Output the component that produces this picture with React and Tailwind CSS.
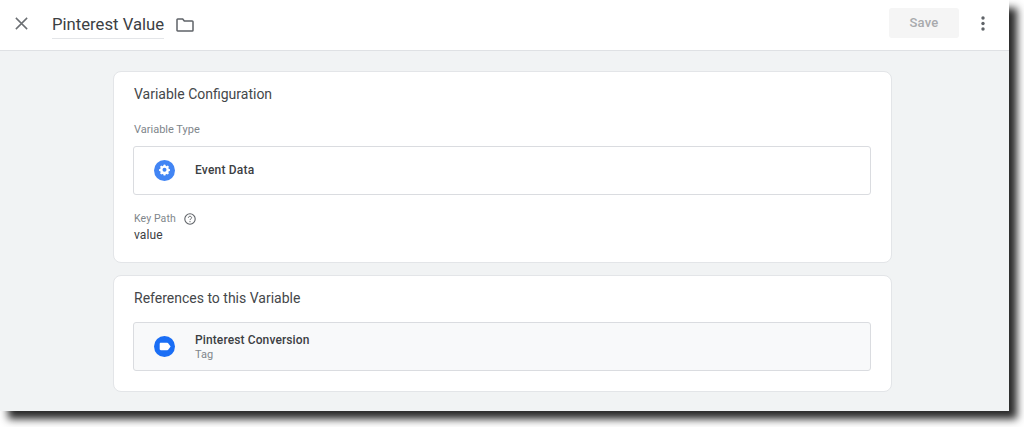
export default function App() {
  const font = { fontFamily: 'Roboto, sans-serif' };
  return (
    <div className="w-[1024px] h-[427px] bg-white overflow-hidden font-['Roboto',sans-serif]" style={font}>
      <div className="w-[1009px] h-[411px] bg-[#f1f3f4] shadow-[8px_8px_8px_#2a2a2a] flex flex-col">
        <header className="h-[51px] shrink-0 bg-white border-b border-[#dfe1e4] flex items-center pl-[15px] pr-[16px] pb-[4px]">
          <svg width="13" height="13" viewBox="0 0 15 15" className="shrink-0">
            <path d="M1 1 L14 14 M14 1 L1 14" stroke="#6b6f73" strokeWidth="1.7" fill="none" />
          </svg>
          <div className="ml-[24px] h-[33px] mt-[-1px] pt-[5px] border-b border-[#e3e5e8] flex items-center">
            <span className="text-[16.7px] leading-[24px] text-[#3c4043]">Pinterest Value</span>
          </div>
          <svg width="18" height="14" viewBox="0 0 18 14" className="ml-[12px] mt-[3px] shrink-0">
            <path d="M1.7 1h5l1.6 2h7.9c.5 0 .8.3.8.8v8.4c0 .5-.3.8-.8.8H1.7c-.4 0-.7-.3-.7-.8V1.8c0-.5.3-.8.7-.8z" stroke="#5f6368" strokeWidth="1.5" fill="none" />
          </svg>
          <div className="ml-auto w-[70px] h-[30px] rounded-[3px] bg-[#f5f5f5] flex items-center justify-center text-[13px] font-medium text-[#a8aaad] tracking-[0.2px]">Save</div>
          <svg width="4" height="15" viewBox="0 0 4 15" className="ml-[22px] mr-[8px] shrink-0">
            <circle cx="2" cy="2" r="1.7" fill="#5f6368" />
            <circle cx="2" cy="7.5" r="1.7" fill="#5f6368" />
            <circle cx="2" cy="13" r="1.7" fill="#5f6368" />
          </svg>
        </header>
        <main className="flex flex-col pl-[113px] pt-[20px] gap-[12px]">
          <section className="w-[779px] h-[192px] bg-white border border-[#e3e5e8] rounded-[8px] pl-[19px] pr-[20px] pt-[13px]">
            <h2 className="pl-[1px] text-[14px] leading-[18px] text-[#44474a]">Variable Configuration</h2>
            <div className="pl-[1px] mt-[20px] text-[11px] leading-[14px] text-[#80868b]">Variable Type</div>
            <div className="mt-[9px] h-[49px] border border-[#dadce0] rounded-[3px] flex items-center pl-[20px]">
              <svg width="21" height="21" viewBox="0 0 24 24" className="shrink-0">
                <circle cx="12" cy="12" r="12" fill="#4285f4" />
                <path fill="#fff" d="M12 6l1 .2.4 1.4 1 .4 1.3-.7 1.4 1.4-.7 1.3.4 1 1.4.4v2l-1.4.4-.4 1 .7 1.3-1.4 1.4-1.3-.7-1 .4-.4 1.4h-2l-.4-1.4-1-.4-1.3.7-1.4-1.4.7-1.3-.4-1-1.4-.4v-2l1.4-.4.4-1-.7-1.3 1.4-1.4 1.3.7 1-.4.4-1.4zm0 3.7a2.3 2.3 0 100 4.6 2.3 2.3 0 000-4.6z" transform="translate(0 -.9)" />
              </svg>
              <span className="ml-[20px] mt-[-1px] text-[12px] font-medium text-[#3c4043] tracking-[0.2px]">Event Data</span>
            </div>
            <div className="pl-[1px] mt-[16px] flex items-center h-[16px]">
              <span className="text-[10.5px] text-[#80868b] tracking-[0.1px]">Key Path</span>
              <svg width="12" height="12" viewBox="0 0 12 12" className="ml-[8px] mt-[-1px] shrink-0">
                <circle cx="6" cy="6" r="5.2" stroke="#5f6368" strokeWidth="1.1" fill="none" />
                <path d="M4.4 4.8c0-1 .7-1.5 1.6-1.5s1.6.6 1.6 1.4c0 1.2-1.6 1.2-1.6 2.4" stroke="#5f6368" strokeWidth="1" fill="none" />
                <circle cx="6" cy="8.7" r=".6" fill="#5f6368" />
              </svg>
            </div>
            <div className="pl-[1px] text-[12px] leading-[16px] text-[#3c4043] tracking-[0.1px]">value</div>
          </section>
          <section className="w-[779px] h-[117px] bg-white border border-[#e3e5e8] rounded-[8px] pl-[19px] pr-[20px] pt-[13px]">
            <h2 className="pl-[1px] text-[14px] leading-[18px] text-[#44474a]">References to this Variable</h2>
            <div className="mt-[15px] h-[49px] bg-[#f8f9fa] border border-[#dadce0] rounded-[3px] flex items-center pl-[20px]">
              <svg width="21" height="21" viewBox="0 0 21 21" className="shrink-0">
                <circle cx="10.5" cy="10.5" r="10.5" fill="#1a6ef5" />
                <path fill="#fff" d="M6.8 6.8h6.4c.5 0 .9.2 1.2.6l2.2 3.1-2.2 3.1c-.3.4-.7.6-1.2.6H6.8c-.6 0-1.1-.5-1.1-1.1V7.9c0-.6.5-1.1 1.1-1.1z" />
              </svg>
              <div className="ml-[20px] flex flex-col">
                <span className="text-[12px] leading-[15px] font-medium text-[#3c4043] tracking-[0.12px]">Pinterest Conversion</span>
                <span className="text-[11px] leading-[13px] text-[#80868b]">Tag</span>
              </div>
            </div>
          </section>
        </main>
      </div>
    </div>
  );
}
